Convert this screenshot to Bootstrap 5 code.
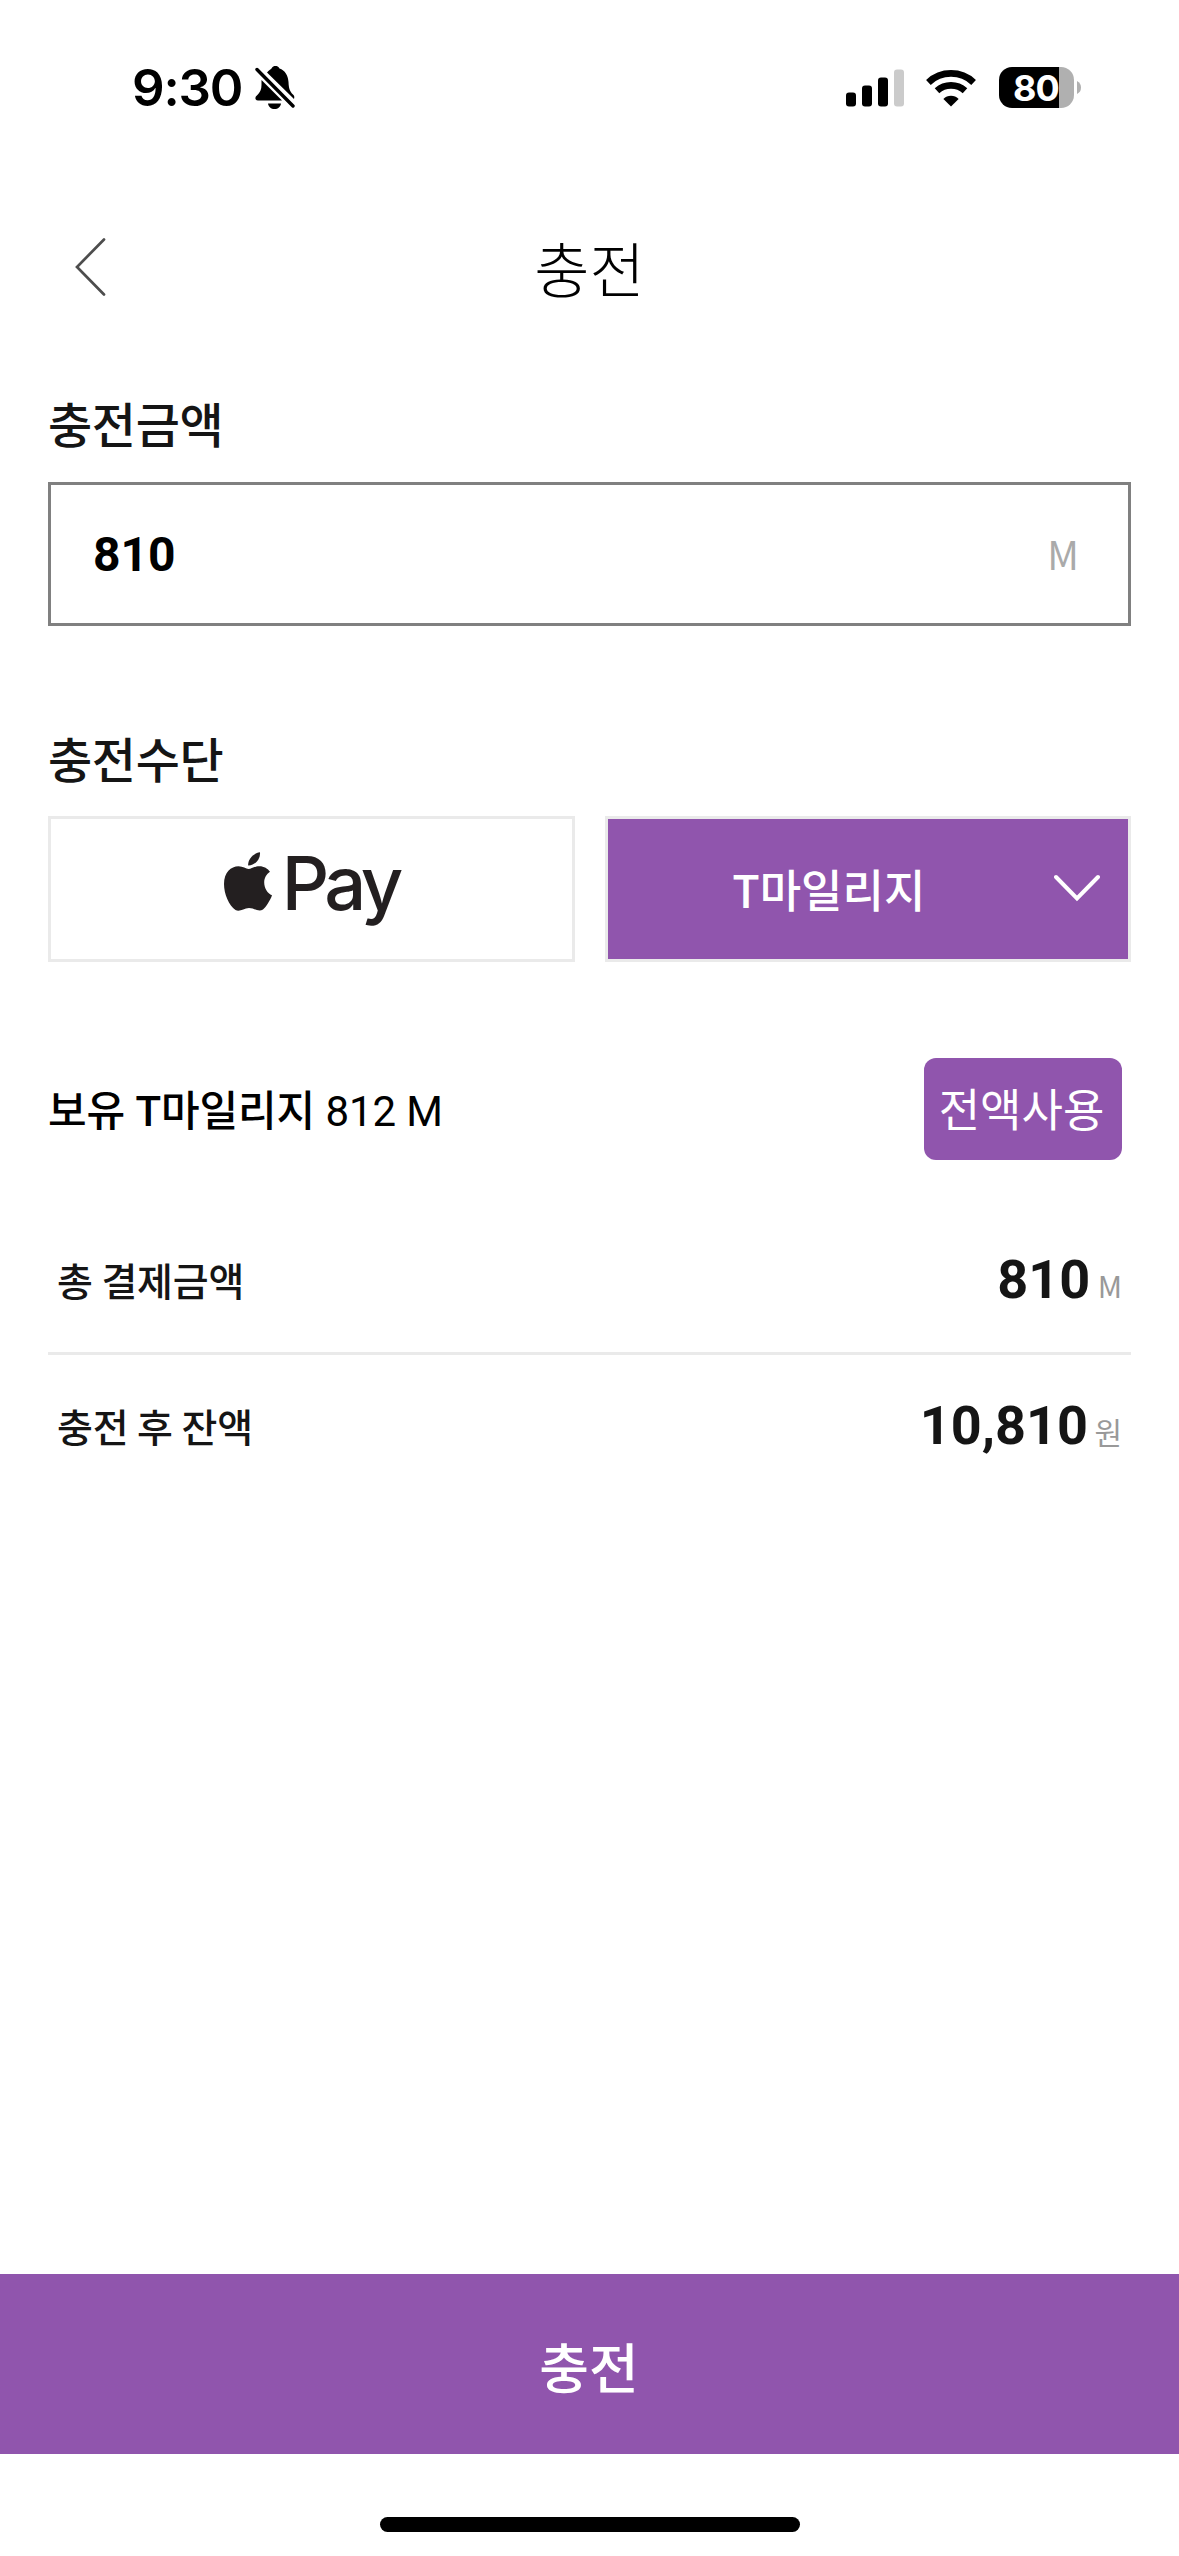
<!DOCTYPE html>
<html lang="ko">
<head>
<meta charset="utf-8">
<meta name="viewport" content="width=device-width, initial-scale=1">
<title>충전</title>
<link href="https://cdn.jsdelivr.net/npm/bootstrap@5.3.0/dist/css/bootstrap.min.css" rel="stylesheet">
<style>
  :root { --brand: #9055ad; --kr: "Noto Sans CJK KR", sans-serif; --num: Roboto, "Noto Sans CJK KR", sans-serif; }
  body { width: 1179px; height: 2556px; overflow: hidden; background: #fff; font-family: var(--kr); color: #151515; }
  svg { display: block; flex: none; }
  .status { height: 176px; padding: 0 98px 0 132px; font-family: Inter, sans-serif; color: #000; }
  .clock { font-size: 51px; font-weight: 600; line-height: 60px; letter-spacing: -1.2px; gap: 13px; }
  .signal { margin-right: 22px; }
  .wifi { margin-right: 23px; }
  .topbar { height: 182px; padding: 0 75px; }
  .topbar h1 { font-size: 60px; font-weight: 300; line-height: 80px; color: #000; }
  .side { width: 60px; }
  .field-title { font-size: 48px; font-weight: 500; line-height: 70px; letter-spacing: -.3px; }
  .first-title { margin-top: 29px; margin-bottom: 25px; }
  .second-title { margin-top: 96px; margin-bottom: 24px; }
  .amount { height: 144px; border: 3px solid #808080; padding: 0 49px 0 42px; }
  .amount-num { font: 700 48px/60px var(--num); color: #000; padding-top: 1px; }
  .amount-unit { font-size: 39px; line-height: 60px; color: #aaa; padding-bottom: 2px; }
  .pay-list { gap: 30px; }
  .pay { height: 146px; border: 3px solid #eaeaea; flex: 1 1 0; }
  .apple { margin-right: 10px; margin-top: -14px; }
  .pay-word { font: 500 74px/90px Inter, sans-serif; color: #231f20; letter-spacing: -4.5px; margin-top: -12px; }
  .brand-bg { background: var(--brand); color: #fff; }
  .mileage { font-size: 45px; font-weight: 500; line-height: 66px; padding-right: 4px; }
  .chev { margin-right: 28px; margin-top: -2px; }
  .own-row { margin-top: 96px; padding-right: 9px; }
  .own { font-family: var(--num); font-size: 42px; line-height: 60px; color: #000; padding-top: 5px; letter-spacing: -.1px; }
  .own b { font-weight: 500; }
  .all-btn { width: 198px; height: 102px; border-radius: 12px; font-size: 45px; line-height: 66px; padding-right: 3px; padding-bottom: 2px; }
  .sum-row { padding: 0 9px; }
  .sum-a { margin-top: 90px; height: 105px; border-bottom: 3px solid #eaeaea; }
  .sum-b { margin-top: 41px; }
  .sum-label { font-size: 39px; font-weight: 500; line-height: 60px; word-spacing: -2px; letter-spacing: -.2px; margin-bottom: 2px; transform: translateY(-2px); }
  .sum-num { font: 700 54px/60px var(--num); margin-right: 3px; }
  .sum-b .sum-num { margin-right: 2px; }
  .sum-unit { font-size: 30px; line-height: 60px; color: #999; }
  .submit { height: 180px; font-size: 54px; font-weight: 500; line-height: 80px; padding-top: 3px; padding-right: 1px; }
  .home { width: 420px; height: 15px; border-radius: 8px; background: #000; margin: 63px 0 24px; }
</style>
</head>
<body class="d-flex flex-column m-0">
<header class="status d-flex justify-content-between align-items-center">
  <div class="d-flex align-items-center clock">
    <span>9:30</span>
    <svg width="41" height="44" viewBox="0 0 41 44">
      <path d="M12 6.500C14 4 15.500 3.500 16.500 2.500C17.500.5 19 0 20.500 0S23.500.5 24.500 2.500C30 4.500 33 9 33.500 16C33.800 23 35 25.500 38 28.500C39.500 30 39.500 31 39 33Z" fill="#000"/>
      <path d="M6.500 14L27 34.500H3C1 34.500 0 33 .5 31.500C1 29 6.500 27.500 6.500 19Z" fill="#000"/>
      <path d="M13 37.500H26C25.500 41 23 43 19.500 43S13.500 41 13 37.500Z" fill="#000"/>
      <path d="M2 3.500L38 40" stroke="#000" stroke-width="3.400" stroke-linecap="round"/>
    </svg>
  </div>
  <div class="d-flex align-items-center">
    <svg class="signal" width="58" height="38" viewBox="0 0 58 38">
      <rect x="0" y="23.500" width="10" height="14" rx="3"/><rect x="16" y="16.500" width="10" height="21" rx="3"/>
      <rect x="32" y="8.500" width="10" height="29" rx="3"/><rect x="48" y=".5" width="10" height="37" rx="3" fill="#cbcbcb"/>
    </svg>
    <svg class="wifi" width="50" height="38" viewBox="0 0 50 38" fill="none" stroke="#000" stroke-width="6.800">
      <path d="M2.400 13.400A33 33 0 0 1 47.600 13.400M11 21.700A21 21 0 0 1 39 21.700"/>
      <path d="M25 37.500L17.400 30A10.800 10.800 0 0 1 32.600 30Z" fill="#000" stroke="none"/>
    </svg>
    <svg width="82" height="42" viewBox="0 0 82 42">
      <path d="M60 0H62A13 13 0 0 1 75 13V28A13 13 0 0 1 62 41H60Z" fill="#b0b0b0"/>
      <path d="M60 0H13A13 13 0 0 0 0 13V28A13 13 0 0 0 13 41H60Z"/>
      <path d="M78 14Q82 16 82 20.500T78 27Z" fill="#b0b0b0"/>
      <text x="37" y="33.500" text-anchor="middle" font-family="Inter" font-weight="700" font-size="36" letter-spacing="-.8" fill="#fff">80</text>
    </svg>
  </div>
</header>
<nav class="topbar d-flex justify-content-between align-items-center">
  <div class="side"><svg width="31" height="58" viewBox="0 0 31 58" fill="none" stroke="#4d4d4d" stroke-width="2.700" stroke-linecap="round"><path d="M29 1.500L2 29L29 56.500"/></svg></div>
  <h1 class="m-0">충전</h1>
  <div class="side"></div>
</nav>
<main class="d-flex flex-column flex-grow-1 px-5">
  <div class="field-title first-title">충전금액</div>
  <div class="amount d-flex justify-content-between align-items-center">
    <span class="amount-num">810</span><span class="amount-unit">M</span>
  </div>
  <div class="field-title second-title">충전수단</div>
  <div class="d-flex pay-list">
    <div class="pay d-flex justify-content-center align-items-center">
      <svg class="apple" width="48" height="60" viewBox="0 0 48 60" fill="#231f20">
        <path d="M36 .3C36.500 7 31 13.700 24.200 13.500C23.500 7.500 29.500 1 36 .3Z"/>
        <path d="M24.500 17C27.500 17 30 14.200 35.500 14.200C40 14.200 43.800 16.500 46 19.800C42.500 22 40.200 26 40.200 30.500C40.200 36 43.500 41.500 48 43.200C46.500 48 41.500 55.500 39 57.500C34.500 60.500 30.500 56 25 56C19.500 56 16 60.500 11.500 58C5 53.500 0 42 0 32C0 20.500 7 14.300 14.500 14.300C19 14.300 22 17 24.500 17Z"/>
      </svg>
      <span class="pay-word">Pay</span>
    </div>
    <div class="pay brand-bg d-flex align-items-center">
      <span class="mileage flex-grow-1 text-center">T마일리지</span>
      <svg class="chev" width="46" height="28" viewBox="0 0 46 28" fill="none" stroke="#fff" stroke-width="4" stroke-linecap="round"><path d="M2 3L23 24.500L44 3"/></svg>
    </div>
  </div>
  <div class="own-row d-flex justify-content-between align-items-center">
    <div class="own"><b>보유 T마일리지</b> 812 M</div>
    <div class="all-btn brand-bg d-flex justify-content-center align-items-center">전액사용</div>
  </div>
  <div class="sum-row sum-a d-flex justify-content-between align-items-baseline">
    <span class="sum-label">총 결제금액</span>
    <span><span class="sum-num">810</span> <span class="sum-unit">M</span></span>
  </div>
  <div class="sum-row sum-b d-flex justify-content-between align-items-baseline">
    <span class="sum-label">충전 후 잔액</span>
    <span><span class="sum-num">10,810</span> <span class="sum-unit">원</span></span>
  </div>
</main>
<footer class="d-flex flex-column align-items-center">
  <div class="submit brand-bg w-100 d-flex justify-content-center align-items-center">충전</div>
  <div class="home"></div>
</footer>
<script src="https://cdn.jsdelivr.net/npm/bootstrap@5.3.0/dist/js/bootstrap.bundle.min.js"></script>
</body>
</html>
